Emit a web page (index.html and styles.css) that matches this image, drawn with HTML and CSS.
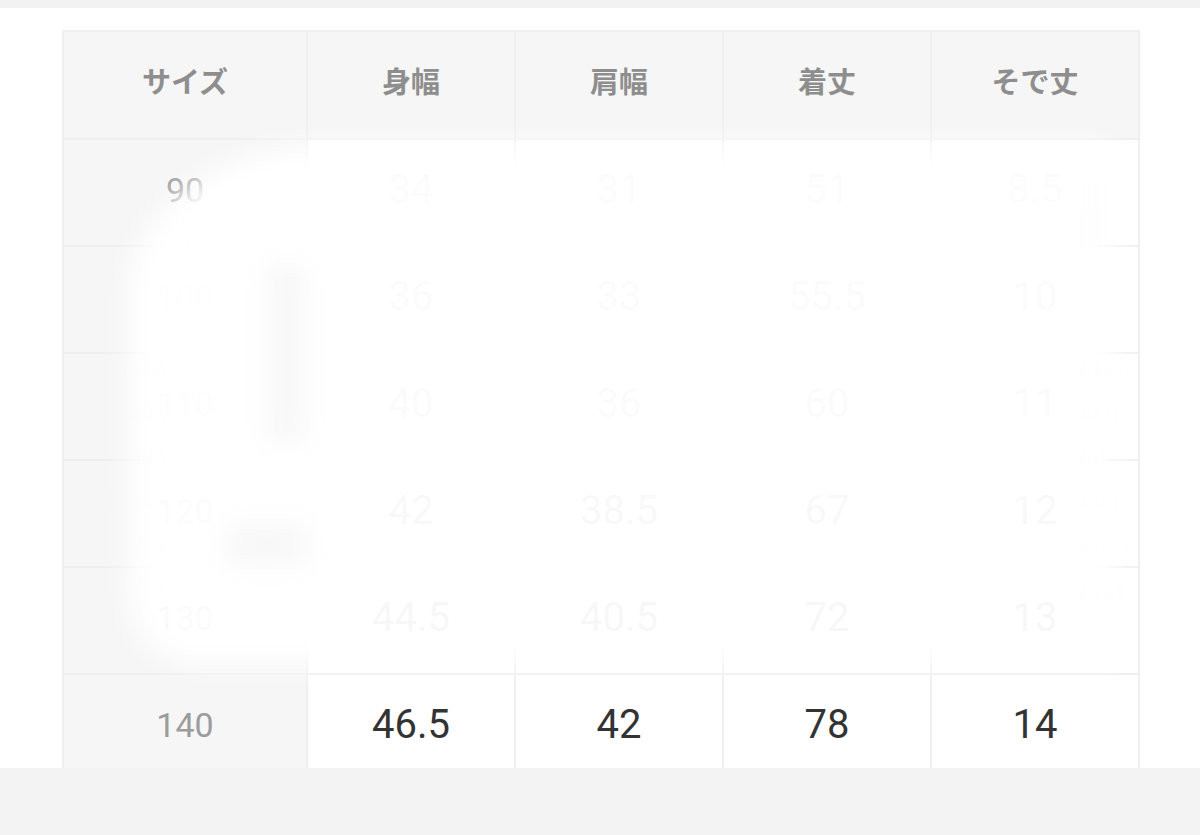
FILE: index.html
```html
<!DOCTYPE html>
<html lang="ja">
<head>
<meta charset="utf-8">
<title>サイズ表</title>
<link rel="stylesheet" href="styles.css">
</head>
<body>
<div class="topbar"></div>
<main class="content">
  <div class="table-wrap">
    <table class="size-table">
      <thead>
        <tr><th class="c-size">サイズ</th><th>身幅</th><th>肩幅</th><th>着丈</th><th>そで丈</th></tr>
      </thead>
      <tbody>
        <tr><th>90</th><td>34</td><td>31</td><td>51</td><td>8.5</td></tr>
        <tr><th>100</th><td>36</td><td>33</td><td>55.5</td><td>10</td></tr>
        <tr><th>110</th><td>40</td><td>36</td><td>60</td><td>11</td></tr>
        <tr><th>120</th><td>42</td><td>38.5</td><td>67</td><td>12</td></tr>
        <tr><th>130</th><td>44.5</td><td>40.5</td><td>72</td><td>13</td></tr>
        <tr><th>140</th><td>46.5</td><td>42</td><td>78</td><td>14</td></tr>
      </tbody>
    </table>
    <div class="veil"></div>
    <div class="smudge smudge-v"></div>
    <div class="smudge smudge-h"></div>
  </div>
</main>
<footer class="bottombar"></footer>
</body>
</html>
```
FILE: styles.css
```css
html, body {
  margin: 0;
  padding: 0;
  background: #ffffff;
}
body {
  width: 1200px;
  height: 835px;
  overflow: hidden;
  display: flex;
  flex-direction: column;
  font-family: Roboto, "Noto Sans CJK JP", sans-serif;
}
.topbar {
  height: 8px;
  background: #f2f2f2;
  flex: none;
}
.content {
  flex: none;
  height: 760px;
  overflow: hidden;
  padding: 22px 0 0 62px;
  box-sizing: border-box;
}
.bottombar {
  flex: 1;
  background: #f3f3f3;
}
.table-wrap {
  position: relative;
  width: 1076px;
}
.size-table {
  border-collapse: collapse;
  table-layout: fixed;
  width: 1076px;
}
.size-table th,
.size-table td {
  border: 2px solid #efefef;
  text-align: center;
  vertical-align: middle;
  padding: 0 0 6px;
  height: 99px;
}
.size-table thead th {
  height: 96px;
  padding: 0 0 10px;
  background: #f6f6f6;
  color: #8e8e8e;
  font-family: "Noto Sans CJK JP", sans-serif;
  font-weight: 700;
  font-size: 29px;
  width: 206px;
}
.size-table thead th.c-size {
  width: 242px;
}
.size-table tbody th {
  background: #f6f6f6;
  color: #9c9c9c;
  font-weight: 400;
  font-size: 34px;
}
.size-table tbody td {
  background: #ffffff;
  color: #333333;
  font-weight: 400;
  font-size: 40px;
}
.veil {
  position: absolute;
  left: 66px;
  top: 114px;
  width: 990px;
  height: 522px;
  border-radius: 200px 24px 24px 70px / 150px 24px 24px 70px;
  background: linear-gradient(to bottom, rgba(255, 255, 255, 0.99) 0%, rgba(255, 255, 255, 0.985) 40%, rgba(255, 255, 255, 0.955) 100%);
  filter: blur(14px);
}
.smudge {
  position: absolute;
  background: #f0f0f0;
  filter: blur(12px);
  opacity: 0.5;
}
.smudge-v {
  left: 206px;
  top: 236px;
  width: 36px;
  height: 176px;
}
.smudge-h {
  left: 166px;
  top: 495px;
  width: 78px;
  height: 40px;
}
```
